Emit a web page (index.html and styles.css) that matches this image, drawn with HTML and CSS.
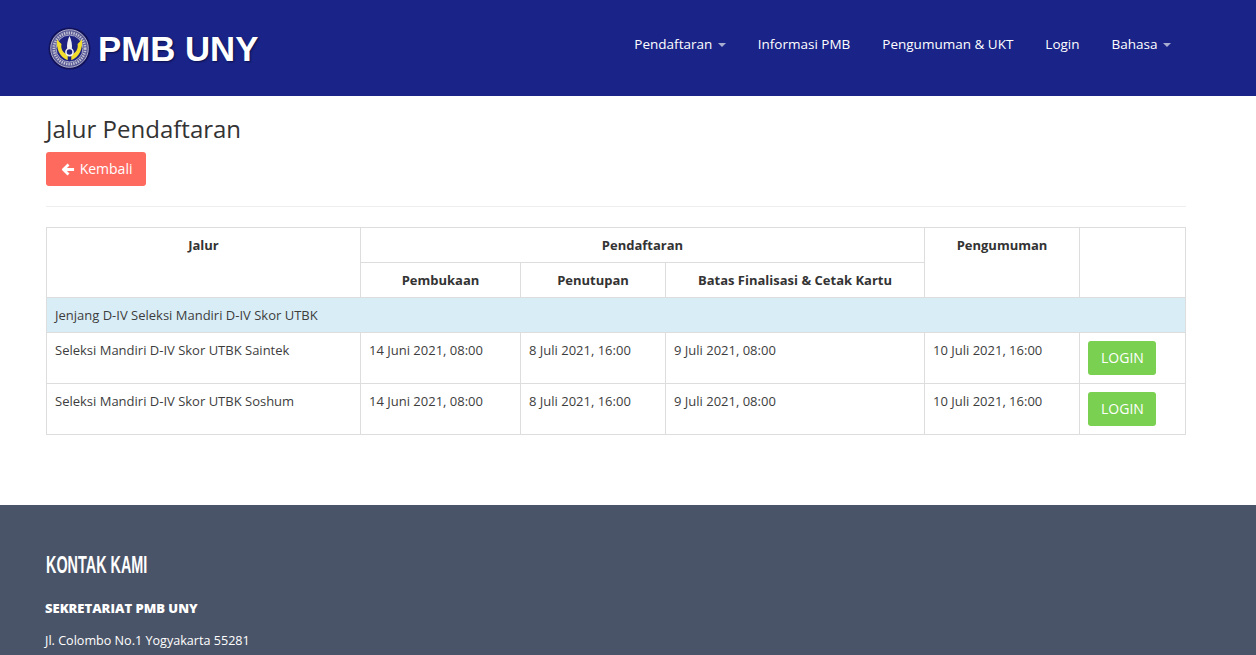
FILE: index.html
```html
<!DOCTYPE html>
<html>
<head>
    <link rel="stylesheet" href="styles.css">
</head>
<body>
    <!-- Top bar -->
    <header class="topbar">
        <a class="brand">
            <svg class="emblem" viewBox="0 0 48 48">
                <circle cx="24" cy="24" r="23.500" fill="#12125c"/>
                <circle cx="24" cy="24" r="21" fill="#5a5a96" stroke="#bdbdd2" stroke-width="1"/>
                <circle cx="24" cy="24" r="17.500" fill="none" stroke="#c4c4d6" stroke-width="3" stroke-dasharray="1.500 1.200"/>
                <circle cx="24" cy="24" r="15" fill="#1d2180" stroke="#d8d8e4" stroke-width="0.800"/>
                <path d="M10 14c-1 10 3 20 12 23l0-6c-5-2-8-6-7-12z" fill="#f2dd2c"/>
                <path d="M38 14c1 10-3 20-12 23l0-6c5-2 8-6 7-12z" fill="#f2dd2c"/>
                <path d="M24 10c2 4 3.500 10 2.500 15h-5c-1-5 .5-11 2.500-15z" fill="#ececf2"/>
                <circle cx="24" cy="28" r="4" fill="#1d2180" stroke="#ececf2" stroke-width="1.800"/>
            </svg>
            <span class="brand-text">PMB UNY</span>
        </a>
        <nav class="nav">
            <a>Pendaftaran <i class="caret"></i></a>
            <a>Informasi PMB</a>
            <a>Pengumuman &amp; UKT</a>
            <a>Login</a>
            <a>Bahasa <i class="caret"></i></a>
        </nav>
    </header>

    <!-- Main content -->
    <main class="content">
        <h2 class="title">Jalur Pendaftaran</h2>
        <a class="btn btn-back">
            <svg class="arrow" viewBox="0 0 14 14">
                <path d="M7 1.500L1.500 7 7 12.500M2 7h11" fill="none" stroke="#fff" stroke-width="3"/>
            </svg>
            Kembali
        </a>
        <hr class="divider">

        <table class="jalur">
            <colgroup>
                <col class="col-jalur">
                <col class="col-buka">
                <col class="col-tutup">
                <col class="col-final">
                <col class="col-umum">
                <col class="col-aksi">
            </colgroup>
            <thead>
                <tr>
                    <th rowspan="2">Jalur</th>
                    <th colspan="3">Pendaftaran</th>
                    <th rowspan="2">Pengumuman</th>
                    <th rowspan="2"></th>
                </tr>
                <tr>
                    <th>Pembukaan</th>
                    <th>Penutupan</th>
                    <th>Batas Finalisasi &amp; Cetak Kartu</th>
                </tr>
            </thead>
            <tbody>
                <tr class="group">
                    <td colspan="6">Jenjang D-IV Seleksi Mandiri D-IV Skor UTBK</td>
                </tr>
                <tr>
                    <td>Seleksi Mandiri D-IV Skor UTBK Saintek</td>
                    <td>14 Juni 2021, 08:00</td>
                    <td>8 Juli 2021, 16:00</td>
                    <td>9 Juli 2021, 08:00</td>
                    <td>10 Juli 2021, 16:00</td>
                    <td><a class="btn btn-login">LOGIN</a></td>
                </tr>
                <tr>
                    <td>Seleksi Mandiri D-IV Skor UTBK Soshum</td>
                    <td>14 Juni 2021, 08:00</td>
                    <td>8 Juli 2021, 16:00</td>
                    <td>9 Juli 2021, 08:00</td>
                    <td>10 Juli 2021, 16:00</td>
                    <td><a class="btn btn-login">LOGIN</a></td>
                </tr>
            </tbody>
        </table>
    </main>

    <!-- Footer -->
    <footer class="footer">
        <h3 class="footer-title">KONTAK KAMI</h3>
        <p class="footer-name">SEKRETARIAT PMB UNY</p>
        <p class="footer-line">Jl. Colombo No.1 Yogyakarta 55281</p>
    </footer>
</body>
</html>
```

FILE: styles.css
```css
html, body {
    height: 655px;
    overflow: hidden;
}

body {
    margin: 0;
    background: #fff;
    color: #333;
    font-family: 'Open Sans', sans-serif;
    font-size: 13px;
}

a {
    text-decoration: none;
}

.topbar {
    height: 96px;
    background: #1a2488;
    display: flex;
    align-items: center;
    justify-content: space-between;
    padding: 0 85px 0 48px;
}

.brand {
    display: flex;
    align-items: center;
    gap: 7px;
}

.emblem {
    width: 43px;
    height: 43px;
}

.brand-text {
    color: #fff;
    font-family: 'Liberation Sans', sans-serif;
    font-weight: bold;
    font-size: 34.800px;
    margin-top: 2px;
    text-shadow: 1px 1px 2px #0b0f4a;
}

.nav {
    display: flex;
    gap: 32px;
    margin-top: -8px;
}

.nav a {
    color: #fff;
    font-size: 13.500px;
}

.caret {
    display: inline-block;
    width: 0;
    height: 0;
    margin-left: 2px;
    vertical-align: middle;
    border-top: 4px solid #a9aed0;
    border-left: 4px solid transparent;
    border-right: 4px solid transparent;
}

.content {
    height: 409px;
    padding: 0 70px 0 46px;
}

.title {
    margin: 0;
    padding-top: 16px;
    font-size: 24px;
    line-height: 33px;
    font-weight: 400;
    color: #333;
}

.btn {
    display: inline-block;
    color: #fff;
    font-size: 14px;
    line-height: 20px;
    padding: 7px 13px;
    border-radius: 3px;
}

.btn-back {
    margin-top: 7px;
    background: #ff6a5f;
    padding: 7px 14px 7px 16px;
}

.arrow {
    width: 13px;
    height: 13px;
    margin-right: 1px;
    vertical-align: -2px;
}

.divider {
    border: 0;
    border-top: 1px solid #eee;
    margin: 20px 0;
}

.jalur {
    width: 1139px;
    table-layout: fixed;
    border-collapse: collapse;
    line-height: 18px;
}

.jalur th, .jalur td {
    border: 1px solid #ddd;
    padding: 8px;
    vertical-align: top;
    text-align: left;
}

.jalur td {
    color: #3d3d3d;
}

.jalur th {
    text-align: center;
    font-weight: 700;
}

.col-jalur { width: 314px; }
.col-buka { width: 160px; }
.col-tutup { width: 145px; }
.col-final { width: 259px; }
.col-umum { width: 155px; }
.col-aksi { width: 106px; }

.group td {
    background: #d9edf7;
}

.jalur .btn-login {
    background: #7ad050;
    color: #fff;
    display: block;
    width: 42px;
    text-align: center;
}

.footer {
    height: 150px;
    background: #4a5468;
    color: #fff;
    padding: 46px 46px 0;
    box-sizing: border-box;
}

.footer-title {
    margin: 0;
    font-family: 'Liberation Sans', sans-serif;
    font-size: 24px;
    line-height: 28px;
    font-weight: bold;
    transform: scaleX(0.6);
    transform-origin: left;
}

.footer-name {
    margin: 20px 0 0 -1px;
    font-size: 13px;
    font-weight: 800;
    line-height: 18px;
}

.footer-line {
    margin: 15px 0 0 -1px;
    font-size: 12.600px;
    line-height: 18px;
}
```
